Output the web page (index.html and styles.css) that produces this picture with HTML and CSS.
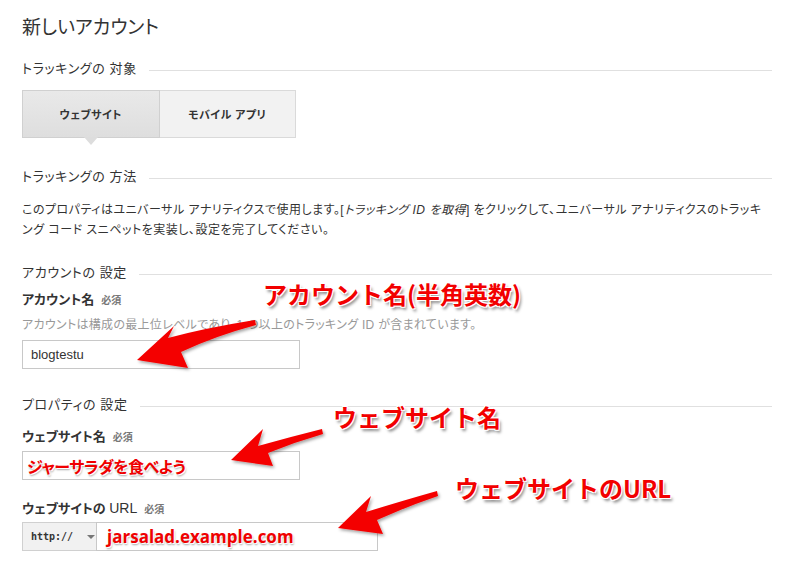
FILE: index.html
```html
<!DOCTYPE html>
<html lang="ja">
<head>
    <meta charset="UTF-8">
    <title>新しいアカウント</title>
    <link rel="stylesheet" href="styles.css">
</head>
<body>
    <div class="page">
        <h1 class="title">新しいアカウント</h1>

        <div class="section-head s-target"><span>トラッキングの 対象</span><div class="rule"></div></div>
        <div class="tabs">
            <div class="tab selected">ウェブサイト</div>
            <div class="tab">モバイル アプリ</div>
        </div>

        <div class="section-head s-method"><span>トラッキングの 方法</span><div class="rule"></div></div>
        <p class="desc">このプロパティはユニバーサル アナリティクスで使用します。[<em>トラッキング ID を取得</em>] をクリックして、ユニバーサル アナリティクスのトラッキ<br>ング コード スニペットを実装し、設定を完了してください。</p>

        <div class="section-head s-account"><span>アカウントの 設定</span><div class="rule"></div></div>
        <div class="label l-account">アカウント名<span class="req">必須</span></div>
        <div class="help">アカウントは構成の最上位レベルであり、1 つ以上のトラッキング ID が含まれています。</div>
        <div class="field f-account">blogtestu</div>

        <div class="section-head s-property"><span>プロパティの 設定</span><div class="rule"></div></div>
        <div class="label l-site">ウェブサイト名<span class="req">必須</span></div>
        <div class="field f-site"><span class="note-in">ジャーサラダを食べよう</span></div>
        <div class="label l-url">ウェブサイトの <span class="latin">URL</span><span class="req">必須</span></div>
        <div class="url-group">
            <div class="scheme">http://<span class="caret"></span></div>
            <div class="field f-url"><span class="note-url">jarsalad.example.com</span></div>
        </div>
    </div>

    <!-- annotations drawn over the screenshot -->
    <div class="note n-account">アカウント名(半角英数)</div>
    <div class="note n-site">ウェブサイト名</div>
    <div class="note n-url">ウェブサイトのURL</div>

    <svg class="arrows" width="812" height="565" viewBox="0 0 812 565">
        <defs>
            <filter id="shadow" x="-20%" y="-20%" width="140%" height="140%">
                <feDropShadow dx="1.5" dy="2" stdDeviation="1.5" flood-color="#000" flood-opacity="0.35"/>
            </filter>
        </defs>
        <g fill="#f40000" filter="url(#shadow)">
            <path d="M255 320 Q205 328 168 338 L174 326 L137 360 L188 368 L181 352 Q215 336 256 325 Z"/>
            <path d="M322 429 Q290 437 258 446 L263 429 L231 460 L273 466 L268 453 Q295 442 323 434 Z"/>
            <path d="M437 491 Q405 500 366 512 L371 496 L338 528 L383 534 L377 520 Q408 506 438 496 Z"/>
        </g>
    </svg>
</body>
</html>
```

FILE: styles.css
```css
body {
    margin: 0;
    padding: 0;
    background: #fff;
    color: #333;
    font-family: "Liberation Sans", "Noto Sans CJK JP", sans-serif;
    font-feature-settings: "palt";
    position: relative;
    width: 812px;
    height: 565px;
    overflow: hidden;
}

.page {
    padding: 16px 40px 0 22px;
}

.title {
    margin: 0;
    font-size: 19px;
    font-weight: 400;
    line-height: 24px;
    color: #333;
}

.section-head {
    display: flex;
    align-items: center;
    gap: 12px;
    font-size: 13px;
    letter-spacing: 0.6px;
    line-height: 20px;
    color: #333;
}

.section-head .rule {
    flex: 1;
    border-top: 1px solid #e0e0e0;
    margin-top: 2px;
}

.s-target { margin-top: 19px; }
.s-method { margin-top: 29px; }
.s-account { margin-top: 23px; }
.s-property { margin-top: 26px; }

/* tabs */
.tabs {
    display: flex;
    margin-top: 11px;
    width: 274px;
}

.tab {
    position: relative;
    flex: 1;
    height: 46px;
    display: flex;
    align-items: center;
    justify-content: center;
    font-size: 11px;
    font-weight: 700;
    letter-spacing: 0.4px;
    color: #333;
    background: #f2f2f2;
    border: 1px solid #dadada;
}

.tab + .tab {
    border-left: none;
}

.tab.selected {
    background: linear-gradient(#e9e9e9, #dedede);
    border-color: #d0d0d0;
}

.tab.selected::after {
    content: "";
    position: absolute;
    left: 61px;
    bottom: -8px;
    border-left: 7px solid transparent;
    border-right: 7px solid transparent;
    border-top: 8px solid #dddddd;
}

.desc {
    margin: 13px 0 0;
    font-size: 12px;
    letter-spacing: 0.5px;
    line-height: 20px;
    color: #333;
}

.desc em {
    font-style: italic;
    color: #333;
}

.label {
    font-size: 13px;
    font-weight: 700;
    line-height: 18px;
    color: #333;
}

.label .latin {
    font-weight: 400;
    font-size: 14px;
    color: #333;
}

.req {
    margin-left: 7px;
    font-size: 10px;
    color: #777;
}

.l-account { margin-top: 8px; }
.l-site { margin-top: 13px; }
.l-url { margin-top: 19px; }

.help {
    margin-top: 6px;
    font-size: 12px;
    letter-spacing: 0.3px;
    line-height: 18px;
    color: #999;
}

.field {
    box-sizing: border-box;
    width: 278px;
    height: 29px;
    border: 1px solid #c8c8c8;
    padding: 0 8px;
    display: flex;
    align-items: center;
    font-size: 13px;
    color: #333;
}

.f-account { margin-top: 6px; }
.f-site { margin-top: 4px; padding-left: 4px; }

.note-in {
    font-family: "Noto Sans CJK JP", sans-serif;
    font-size: 16px;
    font-weight: 700;
    letter-spacing: -0.5px;
    color: #f00000;
    text-shadow: 1px 1px 0 #fff, 1px 2px 2px rgba(0, 0, 0, 0.35);
}

.url-group {
    display: flex;
    margin-top: 3px;
    width: 356px;
}

.scheme {
    box-sizing: border-box;
    width: 74px;
    height: 29px;
    display: flex;
    align-items: center;
    padding-left: 8px;
    background: #f1f1f1;
    border: 1px solid #d0d0d0;
    border-right: none;
    font-family: "DejaVu Sans Mono", monospace;
    font-size: 10px;
    font-weight: 700;
    color: #333;
}

.caret {
    margin-left: 14px;
    border-left: 4px solid transparent;
    border-right: 4px solid transparent;
    border-top: 4px solid #777;
}

.f-url {
    flex: 1;
    width: auto;
    padding-left: 10px;
}

.note-url {
    font-family: "Open Sans", sans-serif;
    font-size: 17px;
    font-weight: 700;
    color: #f00000;
    text-shadow: 1px 1px 0 #fff, 1px 2px 2px rgba(0, 0, 0, 0.35);
}

/* annotations */
.note {
    position: absolute;
    font-family: "Noto Sans CJK JP", sans-serif;
    font-feature-settings: normal;
    font-size: 24px;
    font-weight: 700;
    line-height: 30px;
    color: #f20000;
    white-space: nowrap;
    text-shadow:
        -1px -1px 0 #fff, 1px -1px 0 #fff, -1px 1px 0 #fff, 1px 1px 0 #fff,
        2px 3px 3px rgba(0, 0, 0, 0.45);
}

.n-account { left: 263px; top: 279px; }
.n-site { left: 333px; top: 402px; }
.n-url { left: 455px; top: 473px; }

.arrows {
    position: absolute;
    top: 0;
    left: 0;
}
```
